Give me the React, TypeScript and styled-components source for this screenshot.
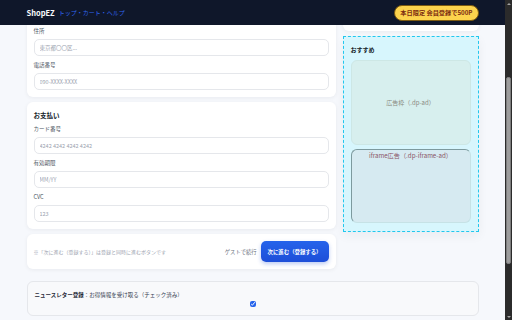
import React, { useLayoutEffect, useRef } from 'react';
import styled, { createGlobalStyle } from 'styled-components';

const GlobalStyle = createGlobalStyle`
  html, body, #root {
    margin: 0;
    height: 100%;
    overflow: hidden;
  }
  body {
    background: #f6f8fc;
    font-family: "Noto Sans CJK JP", "Noto Sans", sans-serif;
    color: #1f2937;
  }
  * {
    box-sizing: border-box;
  }
`;

const Frame = styled.div`
  display: flex;
  height: 100vh;
`;

const Shell = styled.div`
  flex: 1;
  min-width: 0;
  overflow-y: scroll;
  background: #f6f8fc;
`;

/* window scrollbar as it shows in the capture */
const Rail = styled.div`
  width: 7px;
  flex-shrink: 0;
  background: #2b2b2b;
  display: flex;
  flex-direction: column;
  align-items: center;
`;

const Arrow = styled.div<{ $down?: boolean }>`
  height: 7px;
  display: flex;
  align-items: center;
  justify-content: center;

  &::before {
    content: '';
    border-left: 2px solid transparent;
    border-right: 2px solid transparent;
    ${p =>
      p.$down
        ? 'border-top: 2.5px solid #a3a3a3;'
        : 'border-bottom: 2.5px solid #a3a3a3;'}
  }
`;

const Track = styled.div`
  flex: 1;
  width: 100%;
  display: flex;
  justify-content: center;
`;

const Thumb = styled.div`
  margin-top: 70px;
  width: 5px;
  height: 187px;
  border-radius: 2px;
  background: #9d9d9d;
  border: 1px solid #7d7d7d;
`;

const Header = styled.header`
  position: sticky;
  top: 0;
  z-index: 10;
  height: 25px;
  background: #0f172a;
`;

const HeaderInner = styled.div`
  width: 452px;
  margin: 0 auto;
  height: 100%;
  display: flex;
  align-items: center;
  justify-content: space-between;
`;

const Brand = styled.div`
  display: flex;
  align-items: center;
  gap: 4px;

  strong {
    color: #f8fafc;
    font-size: 7.5px;
    font-weight: 700;
  }
  nav {
    color: #2f66f0;
    font-size: 6px;
  }
`;

const Badge = styled.span`
  display: inline-flex;
  align-items: center;
  height: 16px;
  padding: 0 5px;
  border-radius: 9px;
  background: #fcd34d;
  border: 1px solid #7c5a10;
  color: #7c2d12;
  font-size: 6.2px;
  font-weight: 700;
`;

const Main = styled.main`
  width: 452px;
  margin: 0 auto;
  padding: 12px 0 12px;
`;

const PageTitle = styled.h1`
  margin: 0 0 4px;
  font-size: 8px;
  line-height: 10px;
  font-weight: 700;
  color: #111827;
`;

const Layout = styled.div`
  display: grid;
  grid-template-columns: 309px 136px;
  gap: 7px;
  align-items: start;
`;

const Column = styled.div`
  display: flex;
  flex-direction: column;
  gap: 5px;
`;

const Card = styled.section<{ $height?: number }>`
  background: #ffffff;
  border-radius: 6px;
  padding: 7px 7px;
  box-shadow: 0 1px 4px rgba(15, 23, 42, 0.06);
  ${p => (p.$height ? `height: ${p.$height}px;` : '')}
`;

const CardTitle = styled.h2`
  margin: 0 0 3px;
  font-size: 6.5px;
  line-height: 12px;
  font-weight: 700;
  color: #111827;
`;

const Fields = styled.div`
  display: flex;
  flex-direction: column;
  gap: 4px;
`;

const Field = styled.label`
  display: flex;
  flex-direction: column;
  gap: 3px;

  span {
    font-size: 5.5px;
    line-height: 10px;
    color: #4b5563;
  }
`;

const Input = styled.input`
  height: 17px;
  width: 100%;
  padding: 0 5px;
  border: 1px solid #e5e7eb;
  border-radius: 5px;
  background: #ffffff;
  font-family: inherit;
  font-size: 5.5px;
  color: #374151;
  outline: none;

  &::placeholder {
    color: #9ca3af;
  }
`;

const ActionRow = styled(Card)`
  display: flex;
  align-items: center;
  justify-content: space-between;
`;

const Note = styled.p`
  margin: 0;
  font-size: 5px;
  color: #9ca3af;
`;

const Actions = styled.div`
  display: flex;
  align-items: center;
  gap: 4px;
`;

const GuestLink = styled.span`
  font-size: 5.3px;
  color: #6b7280;
`;

const PrimaryButton = styled.button`
  height: 21px;
  padding: 0 7px;
  border: none;
  border-radius: 5px;
  background: linear-gradient(180deg, #2563eb, #1d4ed8);
  box-shadow: 0 2px 4px rgba(29, 78, 216, 0.3);
  color: #ffffff;
  font-family: inherit;
  font-size: 5.4px;
  font-weight: 600;
`;

const SummaryRow = styled.div`
  display: flex;
  justify-content: space-between;
  font-size: 5.5px;
  line-height: 12px;
  color: #4b5563;
`;

const AdBox = styled.aside`
  border: 1px dashed #22c7ee;
  background: #d7f6fd;
  padding: 7px 7px 8px;
  box-shadow: 0 4px 10px rgba(15, 23, 42, 0.05);
  display: flex;
  flex-direction: column;
  gap: 4px;
`;

const AdTitle = styled.div`
  font-size: 6px;
  line-height: 12px;
  font-weight: 700;
  color: #111827;
`;

const AdSlot = styled.div`
  height: 85px;
  border-radius: 6px;
  border: 1px solid #cde7e5;
  background: #d7efee;
  display: flex;
  align-items: center;
  justify-content: center;
  font-size: 6px;
  color: #8a8a80;
`;

const IframeSlot = styled.div`
  height: 74px;
  border-radius: 6px;
  border: 1px solid #c6e2e6;
  border-top-color: #7d9a9e;
  border-left-color: #7d9a9e;
  background: #d6eaf1;
  padding-top: 1px;
  text-align: center;
  font-size: 6.2px;
  line-height: 10px;
  color: #8a5566;
`;

const Newsletter = styled.div`
  margin-top: 12px;
  padding: 8px 7px;
  border: 1px solid #e5e7eb;
  border-radius: 6px;
  background: #f8f9fb;

  p {
    margin: 0;
    font-size: 5.5px;
    line-height: 10px;
    color: #374151;
  }
  b {
    font-weight: 700;
    color: #1f2937;
  }
`;

const CheckRow = styled.div`
  display: flex;
  justify-content: center;
  margin-top: 1px;

  input {
    width: 6px;
    height: 6px;
    margin: 0;
    accent-color: #2563eb;
  }
`;

const Footer = styled.footer`
  margin-top: 14px;
  padding: 14px 0 28px;
  font-size: 6px;
  line-height: 10px;
  color: #9ca3af;
  text-align: center;
`;

const App = (): JSX.Element => {
  const shellRef = useRef<HTMLDivElement>(null);

  useLayoutEffect(() => {
    if (shellRef.current) shellRef.current.scrollTop = 115;
  }, []);

  return (
    <>
      <GlobalStyle />
      <Frame>
        <Shell ref={shellRef}>
          <Header>
            <HeaderInner>
              <Brand>
                <strong>ShopEZ</strong>
                <nav>トップ・カート・ヘルプ</nav>
              </Brand>
              <Badge>本日限定 会員登録で500P</Badge>
            </HeaderInner>
          </Header>
          <Main>
            <PageTitle>ご購入手続き</PageTitle>
            <Layout>
              <Column>
                <Card>
                  <CardTitle>お届け先</CardTitle>
                  <Fields>
                    <Field>
                      <span>お名前</span>
                      <Input placeholder="山田 太郎" />
                    </Field>
                    <Field>
                      <span>メールアドレス</span>
                      <Input placeholder="taro@example.com" />
                    </Field>
                    <Field>
                      <span>住所</span>
                      <Input placeholder="東京都〇〇区..." />
                    </Field>
                    <Field>
                      <span>電話番号</span>
                      <Input placeholder="090-XXXX-XXXX" />
                    </Field>
                  </Fields>
                </Card>
                <Card>
                  <CardTitle>お支払い</CardTitle>
                  <Fields>
                    <Field>
                      <span>カード番号</span>
                      <Input placeholder="4242 4242 4242 4242" />
                    </Field>
                    <Field>
                      <span>有効期限</span>
                      <Input placeholder="MM/YY" />
                    </Field>
                    <Field>
                      <span>CVC</span>
                      <Input placeholder="123" />
                    </Field>
                  </Fields>
                </Card>
                <ActionRow>
                  <Note>※「次に進む（登録する）」は登録と同時に進むボタンです</Note>
                  <Actions>
                    <GuestLink>ゲストで続行</GuestLink>
                    <PrimaryButton>次に進む（登録する）</PrimaryButton>
                  </Actions>
                </ActionRow>
              </Column>
              <Column>
                <Card $height={95}>
                  <CardTitle>ご注文内容</CardTitle>
                  <SummaryRow>
                    <span>商品小計</span>
                    <span>¥4,980</span>
                  </SummaryRow>
                  <SummaryRow>
                    <span>送料</span>
                    <span>¥500</span>
                  </SummaryRow>
                  <SummaryRow>
                    <span>合計</span>
                    <b>¥5,480</b>
                  </SummaryRow>
                </Card>
                <AdBox>
                  <AdTitle>おすすめ</AdTitle>
                  <AdSlot>広告枠（.dp-ad）</AdSlot>
                  <IframeSlot>iframe広告（.dp-iframe-ad）</IframeSlot>
                </AdBox>
              </Column>
            </Layout>
            <Newsletter>
              <p>
                <b>ニュースレター登録</b>：お得情報を受け取る（チェック済み）
              </p>
              <CheckRow>
                <input type="checkbox" defaultChecked />
              </CheckRow>
            </Newsletter>
            <Footer>© ShopEZ</Footer>
          </Main>
        </Shell>
        <Rail>
          <Arrow />
          <Track>
            <Thumb />
          </Track>
          <Arrow $down />
        </Rail>
      </Frame>
    </>
  );
};

export default App;
